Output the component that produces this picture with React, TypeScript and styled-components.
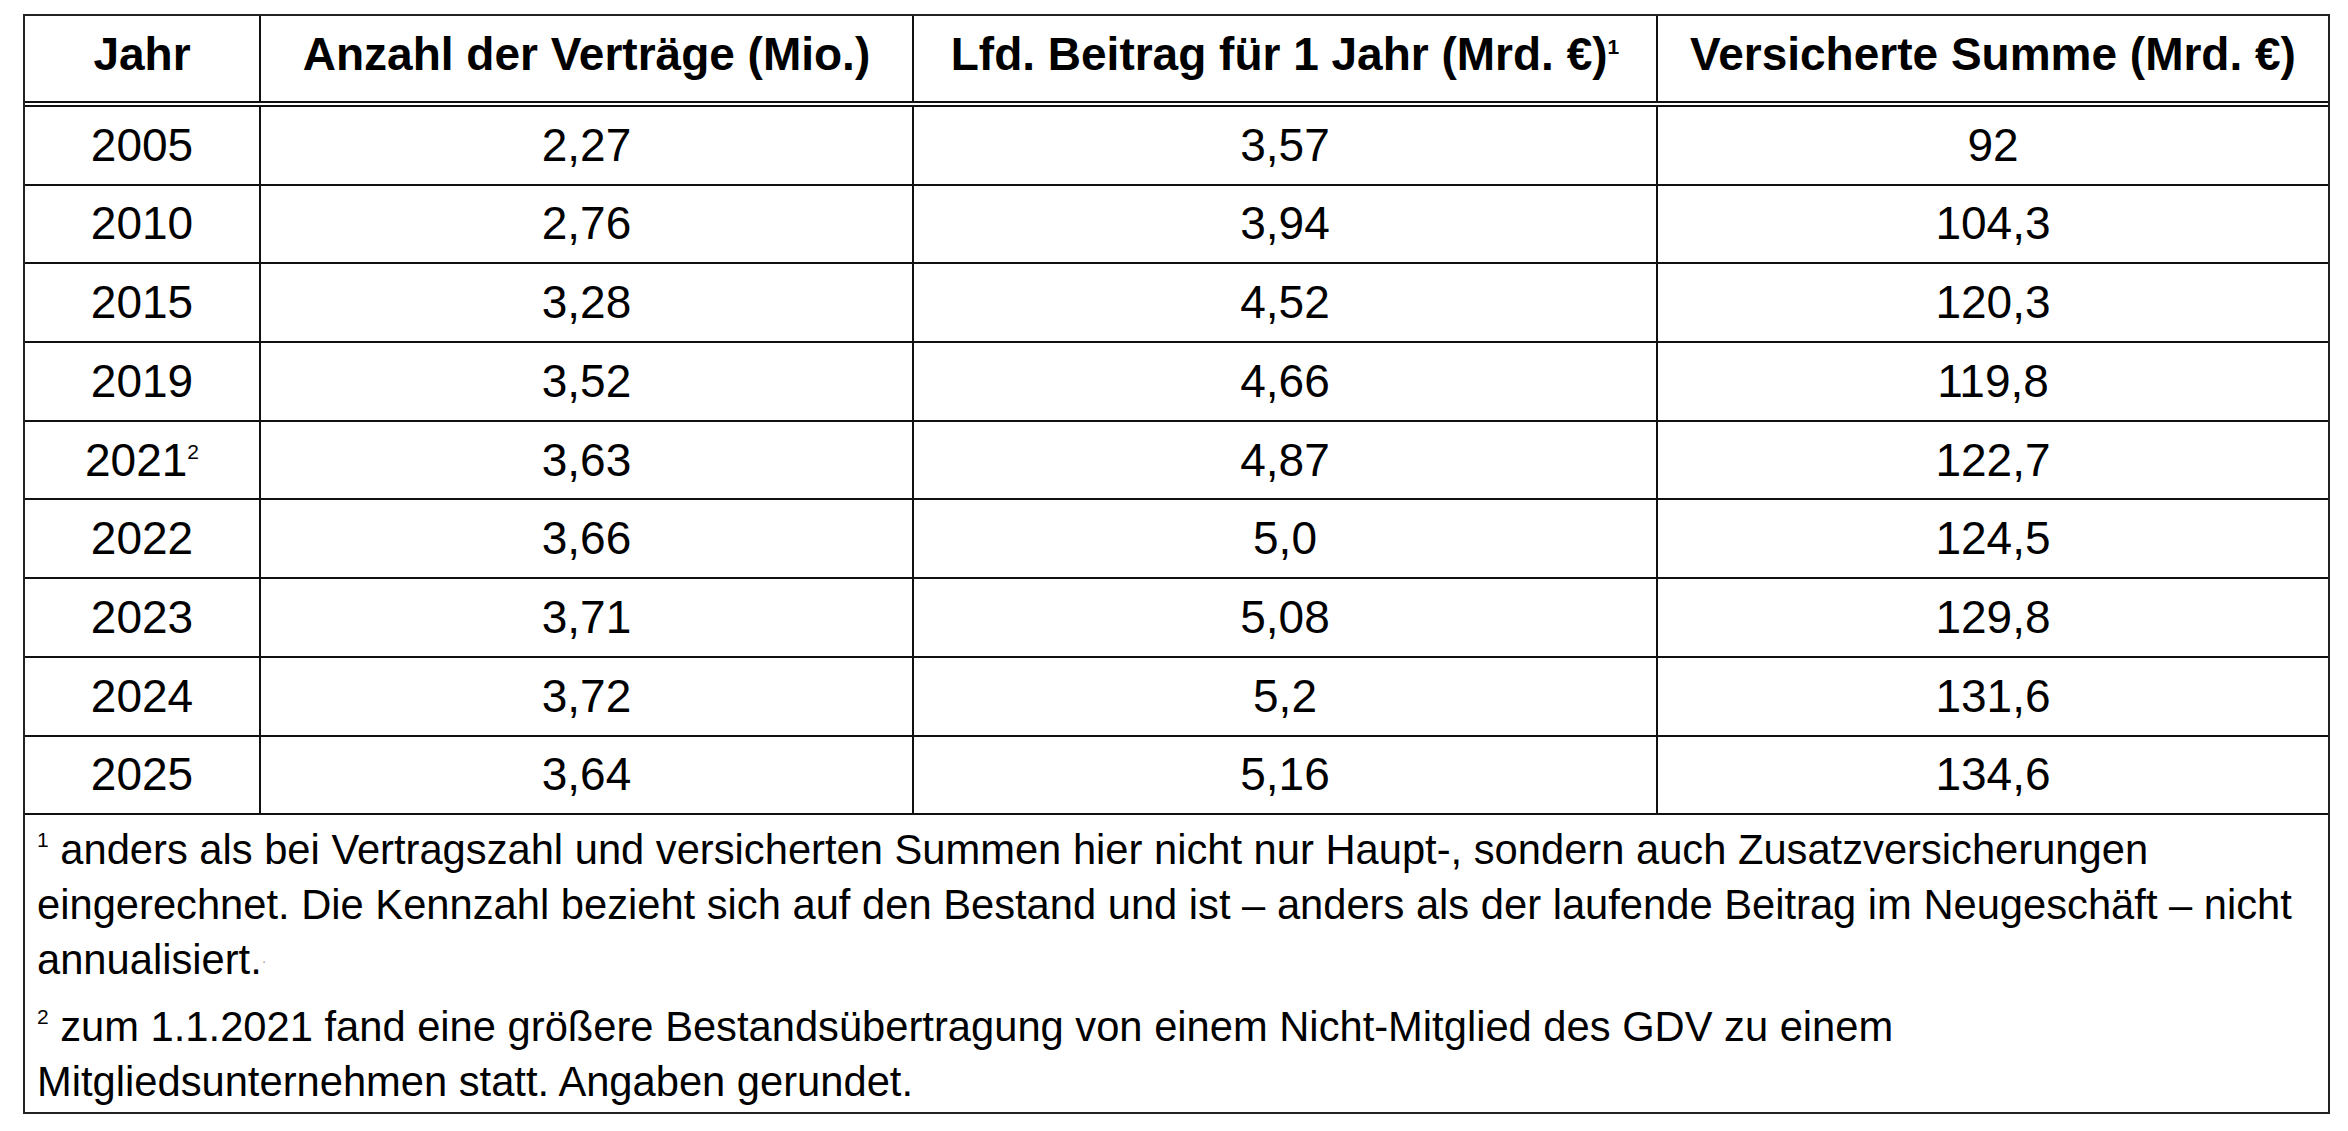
import React from "react";
import styled, { createGlobalStyle } from "styled-components";

const GlobalStyle = createGlobalStyle`
  html, body {
    margin: 0;
    padding: 0;
    background: #ffffff;
  }
  body {
    font-family: "Liberation Sans", Arial, Helvetica, sans-serif;
    color: #000000;
  }
`;

const Page = styled.div`
  padding: 14px 0 0 23px;
`;

const Frame = styled.div`
  box-sizing: border-box;
  width: 2307px;
  border: 2px solid #222222;
  display: flex;
  flex-direction: column;
`;

const cols = "236px 653px 744px 1fr";

const HeadRow = styled.div`
  box-sizing: border-box;
  display: grid;
  grid-template-columns: ${cols};
  height: 91px;
  border-bottom: 6px double #111111;
`;

const HeadCell = styled.div`
  box-sizing: border-box;
  display: flex;
  align-items: center;
  justify-content: center;
  padding-bottom: 8px;
  font-size: 46px;
  font-weight: 700;
  line-height: 1.2;
  white-space: nowrap;
  border-right: 2px solid #111111;
  &:last-child {
    border-right: none;
  }
`;

const DataRow = styled.div`
  box-sizing: border-box;
  display: grid;
  grid-template-columns: ${cols};
  height: 78.7px;
  border-bottom: 2px solid #111111;
`;

const Cell = styled.div`
  box-sizing: border-box;
  display: flex;
  align-items: center;
  justify-content: center;
  font-size: 46px;
  line-height: 1.2;
  white-space: nowrap;
  border-right: 2px solid #111111;
  &:last-child {
    border-right: none;
  }
`;

const CellText = styled.span`
  display: block;
`;

const Sup = styled.span<{ $raise?: number }>`
  display: inline-block;
  font-size: 21px;
  line-height: 1;
  vertical-align: ${(p) => p.$raise ?? 18}px;
`;

const Footnotes = styled.div`
  box-sizing: border-box;
  padding: 7px 4px 3px 12px;
  display: flex;
  flex-direction: column;
  gap: 12px;
`;

const Note = styled.p`
  margin: 0;
  font-size: 41.7px;
  line-height: 55px;
  white-space: nowrap;
`;

const Speck = styled.span`
  display: inline-block;
  font-size: 14px;
  line-height: 1;
  color: #9a9a9a;
  vertical-align: 8px;
`;

type Row = { year: string; sup?: string; a: string; b: string; c: string };

const rows: Row[] = [
  { year: "2005", a: "2,27", b: "3,57", c: "92" },
  { year: "2010", a: "2,76", b: "3,94", c: "104,3" },
  { year: "2015", a: "3,28", b: "4,52", c: "120,3" },
  { year: "2019", a: "3,52", b: "4,66", c: "119,8" },
  { year: "2021", sup: "2", a: "3,63", b: "4,87", c: "122,7" },
  { year: "2022", a: "3,66", b: "5,0", c: "124,5" },
  { year: "2023", a: "3,71", b: "5,08", c: "129,8" },
  { year: "2024", a: "3,72", b: "5,2", c: "131,6" },
  { year: "2025", a: "3,64", b: "5,16", c: "134,6" },
];

export default function App() {
  return (
    <>
      <GlobalStyle />
      <Page>
        <Frame>
          <HeadRow>
            <HeadCell>Jahr</HeadCell>
            <HeadCell>Anzahl der Verträge (Mio.)</HeadCell>
            <HeadCell>
              <CellText>
                Lfd. Beitrag für 1 Jahr (Mrd. €)<Sup $raise={16}>1</Sup>
              </CellText>
            </HeadCell>
            <HeadCell>Versicherte Summe (Mrd. €)</HeadCell>
          </HeadRow>
          {rows.map((r) => (
            <DataRow key={r.year}>
              <Cell>
                <CellText>
                  {r.year}
                  {r.sup && <Sup $raise={17}>{r.sup}</Sup>}
                </CellText>
              </Cell>
              <Cell>{r.a}</Cell>
              <Cell>{r.b}</Cell>
              <Cell>{r.c}</Cell>
            </DataRow>
          ))}
          <Footnotes>
            <Note>
              <Sup $raise={17}>1</Sup> anders als bei Vertragszahl und versicherten Summen hier nicht nur Haupt-, sondern
              auch Zusatzversicherungen
              <br />
              eingerechnet. Die Kennzahl bezieht sich auf den Bestand und ist – anders als der laufende Beitrag im
              Neugeschäft – nicht
              <br />
              annualisiert.<Speck>·</Speck>
            </Note>
            <Note>
              <Sup $raise={17}>2</Sup> zum 1.1.2021 fand eine größere Bestandsübertragung von einem Nicht-Mitglied des
              GDV zu einem
              <br />
              Mitgliedsunternehmen statt. Angaben gerundet.
            </Note>
          </Footnotes>
        </Frame>
      </Page>
    </>
  );
}
